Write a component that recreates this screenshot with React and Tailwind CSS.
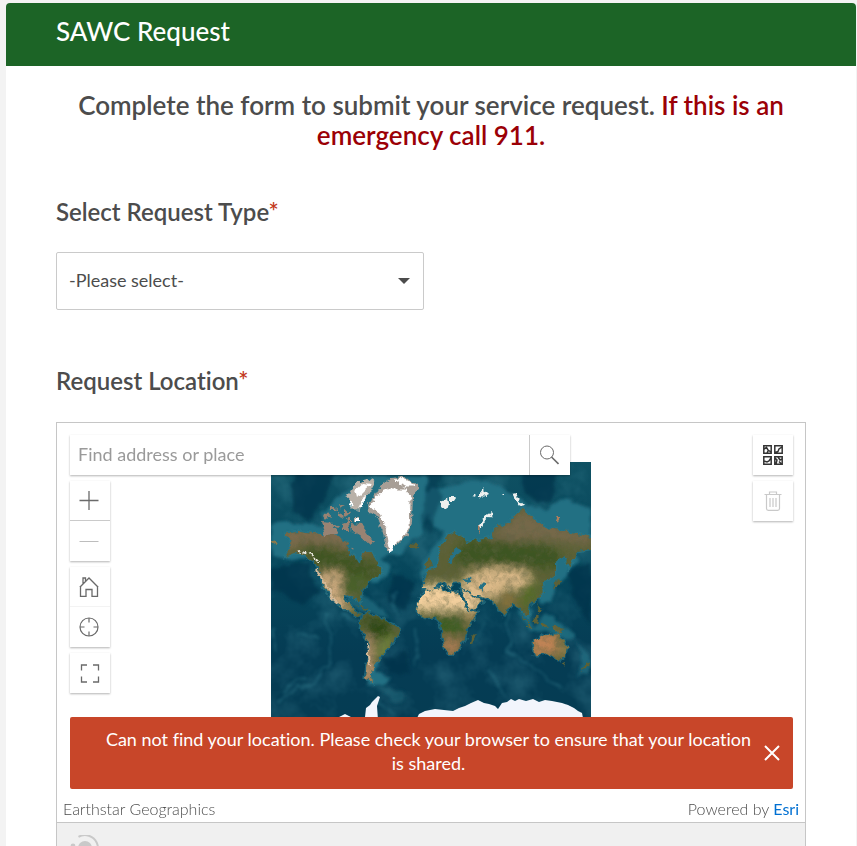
import React from "react";

const LAND = {
  northAmerica:
    "M14 71 27 69 49 72 66 73 76 80 77 90 86 98 89 103 92 90 101 90 106 100 112 110 101 116 94 125 91 130 89 141 85 135 74 133 72 140 79 140 80 144 84 150 90 153 86 154 78 149 66 141 59 133 52 124 49 110 44 100 34 93 24 91 14 95 21 83Z",
  southAmerica:
    "M91 155 97 150 109 155 117 161 129 166 124 178 117 186 109 196 102 206 99 211 101 220 94 215 97 196 98 180 89 166Z",
  africa:
    "M146 148 149 136 154 130 164 126 172 125 176 130 187 131 192 140 197 149 207 150 196 166 194 176 187 188 179 194 174 186 171 173 169 160 164 155 154 156 149 153Z",
  arabia: "M191 128 204 134 212 140 204 146 198 148Z",
  eurasia:
    "M167 90 174 76 184 70 196 80 208 78 221 75 224 65 234 63 251 48 261 55 274 65 301 71 320 75 320 88 305 90 298 106 294 94 284 99 284 113 270 121 273 130 267 136 257 146 257 155 249 146 242 141 232 153 226 143 217 136 207 133 192 127 190 120 179 121 181 127 174 121 168 120 161 127 152 128 152 119 158 109 166 104 168 98Z",
  australia:
    "M261 181 269 175 279 171 283 174 287 170 296 185 294 195 287 198 277 191 264 193Z",
};

const ISLANDS =
  "M204 171 201 183 199 182 200 175Z M249 150 257 160 262 167 258 164Z M263 157 268 153 266 163 261 160Z M271 159 276 164 271 166Z M280 163 292 167 289 171 282 167Z M290 202 294 201 292 205Z M310 208 317 199 318 203 309 210Z M284 124 288 115 290 121 283 128Z M265 142 270 149 268 151Z M139 81 146 82 146 86 140 84Z M155 102 158 95 161 105 155 107Z M84 143 98 147 95 148Z";

const ARCTIC_ISLANDS =
  "M50 61 62 62 68 72 54 73Z M52 54 58 51 61 55 54 57Z M59 44 64 44 65 48 60 48Z M67 50 75 53 72 56 67 54Z M71 62 77 60 78 68 72 68Z M80 61 90 62 103 80 99 83 88 73 81 69Z M68 42 74 45 70 48Z M81 84 84 86 80 88Z M62 64 66 62 67 66Z M75 57 79 56 79 60 76 60Z M74 48 79 50 77 53 74 52Z";

const ELLESMERE =
  "M76 34 86 20 96 17 105 20 99 31 91 42 87 50 81 44Z M82 55 89 55 88 59 82 59Z";

const GREENLAND =
  "M97 43 104 33 109 25 121 16 134 15 149 26 142 34 141 60 136 75 122 85 119 92 115 86 112 70 107 56 98 51Z";

function WorldMap() {
  return (
    <svg viewBox="0 0 320 320" className="absolute top-[39px] left-1/2 h-80 w-80 -translate-x-1/2" role="img" aria-label="World imagery">
      <defs>
        <filter id="coast" x="-5%" y="-5%" width="110%" height="110%">
          <feTurbulence type="fractalNoise" baseFrequency="0.16" numOctaves="3" seed="7" result="n" />
          <feDisplacementMap in="SourceGraphic" in2="n" scale="7" xChannelSelector="R" yChannelSelector="G" />
          <feGaussianBlur stdDeviation="0.4" />
        </filter>
        <filter id="soft6" x="-30%" y="-30%" width="160%" height="160%">
          <feGaussianBlur stdDeviation="4" />
        </filter>
        <filter id="soft2" x="-30%" y="-30%" width="160%" height="160%">
          <feTurbulence type="fractalNoise" baseFrequency="0.06" numOctaves="3" seed="3" result="n" />
          <feDisplacementMap in="SourceGraphic" in2="n" scale="12" xChannelSelector="R" yChannelSelector="G" />
          <feGaussianBlur stdDeviation="1.6" />
        </filter>
        <filter id="seaNoise" x="0" y="0" width="100%" height="100%">
          <feTurbulence type="fractalNoise" baseFrequency="0.03" numOctaves="4" seed="12" />
          <feColorMatrix values="0 0 0 0 0.14  0 0 0 0 0.46  0 0 0 0 0.55  2.4 0 0 0 -1.05" />
        </filter>
        <filter id="landNoise" x="0" y="0" width="100%" height="100%">
          <feTurbulence type="fractalNoise" baseFrequency="0.14" numOctaves="4" seed="5" />
          <feColorMatrix values="0 0 0 0 0.12  0 0 0 0 0.13  0 0 0 0 0.06  2.6 0 0 0 -1.1" />
        </filter>
        <linearGradient id="sea" x1="0" y1="0" x2="0" y2="1">
          <stop offset="0" stopColor="#0f5163" />
          <stop offset="0.35" stopColor="#06465b" />
          <stop offset="0.6" stopColor="#053c54" />
          <stop offset="1" stopColor="#053c52" />
        </linearGradient>
        <clipPath id="landClip">
          {Object.values(LAND).map((d) => (
            <path key={d} d={d} />
          ))}
          <path d={ISLANDS} />
        </clipPath>
        <clipPath id="mapClip">
          <rect width="320" height="320" />
        </clipPath>
      </defs>
      <g clipPath="url(#mapClip)">
        <rect width="320" height="320" fill="url(#sea)" />
        <rect width="320" height="320" filter="url(#seaNoise)" opacity="0.2" />
        <g filter="url(#soft2)" fill="#237083">
          <path d="M0 66 18 58 52 65 50 50 75 28 105 12 155 14 160 45 148 75 128 92 112 94 120 112 104 122 88 108 70 88 20 98 0 95Z" />
          <path d="M155 40 162 28 200 18 235 25 258 45 275 47 297 36 320 50 320 80 160 112 150 118 152 100 172 72 162 62Z" />
          <path d="M281 96 298 92 308 96 300 110 290 118 284 132 268 142 268 120Z" />
          <path d="M246 148 262 150 262 166 276 150 294 164 304 172 300 178 260 170Z" opacity="0.8" />
          <path d="M113 188 105 210 120 218 112 222 94 220 100 200Z" />
          <path d="M74 132 92 132 108 146 122 158 104 152 80 146Z" opacity="0.7" />
          <path d="M92 220 130 228 136 234 128 240 115 232Z" opacity="0.4" />
          <path d="M303 180 318 196 318 212 306 216 312 202Z" opacity="0.7" />
        </g>
        <g filter="url(#soft2)" fill="#03334a" opacity="0.7">
          <path d="M22 10 65 8 60 30 38 60 22 45Z" />
          <path d="M250 12 285 10 282 40 268 44 255 32Z" />
          <path d="M155 8 172 10 168 34 160 70 150 60 155 35Z" opacity="0.6" />
          <path d="M0 105 38 102 50 130 30 140 0 130Z" />
          <path d="M124 112 145 120 135 150 115 140Z" />
          <path d="M298 112 320 100 320 160 302 140Z" />
          <path d="M112 196 135 190 140 212 118 212Z" />
        </g>
        <g filter="url(#soft2)" fill="none" stroke="#3c8b9b" strokeWidth="2" opacity="0.34">
          <path d="M56 150 60 205 42 220 5 238" />
          <path d="M145 165 146 205M127 128 118 142 128 152" />
          <path d="M213 160 205 180M238 150V190L290 225M215 205 235 235" />
          <path d="M3 165V190M25 172 45 177M72 152 88 160" />
          <path d="M12 230 35 215M105 240 125 250" />
        </g>
        <g filter="url(#coast)">
          <g fill="none" stroke="#2b7788" strokeWidth="3" opacity="0.65">
            {Object.values(LAND).map((d) => (
              <path key={d} d={d} />
            ))}
          </g>
          <g clipPath="url(#landClip)">
            <rect width="320" height="320" fill="#5b6135" />
            <g filter="url(#soft6)">
              <path d="M10 65H78L100 92 80 88 52 82 10 88Z" fill="#7b6b4e" />
              <path d="M28 80 75 90 110 105 108 118 50 108Z" fill="#3f5524" />
              <path d="M45 113 70 108 70 128 80 150 65 150Z" fill="#d0ac80" />
              <path d="M73 114 96 112 93 134 74 133Z" fill="#49612c" />
              <path d="M90 152 118 160 125 172 112 184 100 174Z" fill="#2d4a15" />
              <path d="M90 175H101L104 222H90Z" fill="#b89370" />
              <path d="M108 178 125 170 116 195 104 196Z" fill="#70813c" />
              <path d="M140 122H193L212 136 207 150 198 149 140 149Z" fill="#f2cf9d" />
              <path d="M145 154H190L194 172 174 173Z" fill="#3c5d20" />
              <path d="M170 175 194 177 184 195 172 193Z" fill="#a57a53" />
              <path d="M196 152 206 150 197 166Z" fill="#c29b6b" />
              <path d="M224 68 251 48 320 72V84L270 78 215 82Z" fill="#75674a" />
              <path d="M190 80 225 78 280 84 292 97 284 106 245 104 185 103Z" fill="#3c5420" />
              <path d="M192 113 220 105 254 108 262 118 258 127 230 128 226 138 200 134Z" fill="#dbb988" />
              <path d="M253 120 270 119 267 138 255 148 246 138Z" fill="#566b2c" />
              <path d="M228 132 248 135 245 143 233 152Z" fill="#88723e" />
              <path d="M256 170H286L286 192 262 195Z" fill="#bf8355" />
              <path d="M287 178H299V196L288 198Z" fill="#8d7b4a" />
            </g>
            <rect width="320" height="320" filter="url(#landNoise)" opacity="0.4" />
          </g>
          <path d="M176 99 186 86 192 89 184 93 181 102Z M210 119 214 123 212 131 208 124Z M190 116 202 117 196 121Z" fill="#257286" />
          <path d="M46 108 54 122 65 142M96 180 98 204" fill="none" stroke="#d5b997" strokeWidth="2" />
          <path d="M27 88 31 90 40 92 48 101" fill="none" stroke="#e9e6dd" strokeWidth="2" strokeDasharray="4 2" />
          <path d={ARCTIC_ISLANDS} fill="#988373" />
          <path d={ELLESMERE} fill="#b9b1a8" />
          <path d="M84 28 92 21 101 22 93 29 86 36Z M91 35 96 33 92 43 87 47Z M84 56H89V59H84Z M79 38 82 42 80 44Z" fill="#fff" />
          <path d={GREENLAND} fill="#a79e96" />
          <path d="M99 44 108 31 120 27 135 27 139 38 138 65 130 77 123 83 120 92 117 80 115 65 108 50Z M124 18 134 17 143 24 132 24Z" fill="#fff" stroke="#fff" />
          <path d="M170 39 176 37 177 42 175 48 171 45Z M178 36 184 36 182 39 178 39Z M200 34 205 32 204 35Z M209 31 213 26 214 32 217 31 215 35 209 34Z M242 32 246 31 248 37 253 43 249 44 245 38Z M208 65 211 57 220 51 221 53 213 60 210 67Z M230 32 232 32 232 34Z" fill="#edf0ee" />
          <path d="M208 64 211 67 208 70Z M284 55 290 55 287 60Z" fill="#ad7e5d" />
          <path d="M0 76 8 82 6 84 0 80Z" fill="#8b7a4d" />
        </g>
        <path
          d="M0 257 30 256 68 255 74 252 80 255 94 255 95 246 99 243 101 240 107 234 109 235 106 244 107 258 145 258 148 252 154 249 164 247 173 248 182 249 188 246 194 244 200 241 207 238 213 241 218 242 224 244 227 247 231 241 236 240 240 237 244 239 248 237 255 239 262 237 268 240 274 238 281 239 291 241 297 243 303 246 307 249 311 251 312 256 320 265V320H0Z"
          fill="#f2f5fc"
        />
      </g>
    </svg>
  );
}

const STROKE = { fill: "none", stroke: "#6a6a6a", strokeWidth: 1 };

function Icon({ children, className = "" }) {
  return (
    <svg viewBox="0 0 20 20" className={`h-5 w-5 ${className}`} {...STROKE} aria-hidden="true">
      {children}
    </svg>
  );
}

function MapButton({ label, children, disabled }) {
  return (
    <button type="button" aria-label={label} disabled={disabled} className="flex h-10 w-10 items-center justify-center bg-white">
      {children}
    </button>
  );
}

const PANEL = "bg-white shadow-[0_1px_2px_rgba(0,0,0,0.3)]";

function FieldLabel({ htmlFor, children }) {
  return (
    <label htmlFor={htmlFor} className="block text-2xl leading-[30px] font-semibold">
      {children}
      <span className="text-[#c3391c]">*</span>
    </label>
  );
}

export default function App() {
  return (
    <div className="h-screen overflow-hidden bg-[#f3f3f3] pt-[3px] pr-px pl-1.5 font-[Lato,'Open_Sans',sans-serif] text-[#4c4c4c] [font-variant-ligatures:none]">
      <main className="min-h-screen rounded-t-sm bg-white">
        <header className="rounded-t-sm bg-[#1c6426] px-[50px] pt-3 pb-[19px]">
          <h1 className="text-[26px] leading-8 font-medium text-white">SAWC Request</h1>
        </header>

        <form className="px-[50px] pt-6" onSubmit={(e) => e.preventDefault()}>
          <p className="text-center text-[26px] leading-[30px] font-semibold">
            Complete the form to submit your service request.{" "}
            <span className="text-[#9b0006]">If this is an emergency call 911.</span>
          </p>

          <div className="mt-[47px]">
            <FieldLabel htmlFor="type">Select Request Type</FieldLabel>
            <div className="relative mt-[25px] max-w-[368px]">
              <select id="type" className="block h-[58px] w-full appearance-none rounded-xs border border-[#cacaca] bg-white px-3 pb-0.5 text-lg">
                <option>-Please select-</option>
              </select>
              <svg viewBox="0 0 12 6" className="pointer-events-none absolute top-[26px] right-[14px] h-1.5 w-3" aria-hidden="true">
                <path d="M0 0H12L6 6Z" fill="#4c4c4c" />
              </svg>
            </div>
          </div>

          <div className="mt-14">
            <FieldLabel htmlFor="place">Request Location</FieldLabel>
            <div className="mt-[26px] border border-[#c6c6c6]">
              <div className="relative overflow-hidden bg-white">
                <WorldMap />
                <div className="relative flex h-[294px] justify-between pt-3 pr-3 pl-[13px]">
                  <div className="flex flex-col items-start gap-1.5">
                    <div className={`flex h-10 w-[500px] ${PANEL}`}>
                      <input
                        id="place"
                        type="text"
                        placeholder="Find address or place"
                        className="min-w-0 flex-1 px-2 pb-0.5 text-lg placeholder:text-[#9a9a9a]"
                      />
                      <div className="border-l border-[#cacaca]">
                        <MapButton label="Search">
                          <Icon className="-ml-0.5">
                            <circle cx="8" cy="7.5" r="6.5" />
                            <path d="M12.5 12 19.5 19" strokeWidth="1.6" />
                          </Icon>
                        </MapButton>
                      </div>
                    </div>
                    <div className={`divide-y divide-[#cacaca] ${PANEL}`}>
                      <MapButton label="Zoom in">
                        <Icon className="-ml-0.5">
                          <path d="M.5 9.5H19.5M10 0V19" strokeWidth="1.3" />
                        </Icon>
                      </MapButton>
                      <MapButton label="Zoom out" disabled>
                        <Icon className="-ml-0.5">
                          <path d="M.5 10.5H19.5" stroke="#bdbdbd" />
                        </Icon>
                      </MapButton>
                    </div>
                    <div className={`divide-y divide-[#f3f3f3] ${PANEL}`}>
                      <MapButton label="Default map view">
                        <Icon className="-ml-0.5">
                          <path d="M1.5 10V19.5H7V12.5H13V19.5H18.5V10M.8 10.3 10 1 19.2 10.3M4 7V1H6.5V4.5" strokeWidth="1.3" />
                        </Icon>
                      </MapButton>
                      <MapButton label="Find my location">
                        <Icon className="-ml-0.5">
                          <circle cx="10" cy="10" r="9" strokeWidth="1.2" />
                          <path d="M10 1V5.5M10 14.5V19M1 10H5.5M14.5 10H19" strokeWidth="1.2" />
                        </Icon>
                      </MapButton>
                    </div>
                    <div className={PANEL}>
                      <MapButton label="Enter fullscreen">
                        <Icon>
                          <path d="M1.5 7.5V2H7M13 2H18.5V7.5M18.5 13.5V19H13M7 19H1.5V13.5" strokeWidth="1.3" />
                        </Icon>
                      </MapButton>
                    </div>
                  </div>
                  <div className="flex flex-col gap-1.5">
                    <div className={PANEL}>
                      <MapButton label="Basemap gallery">
                        <Icon>
                          <path
                            d="M.8.8H8.2V8.2H.8ZM11.8.8H19.2V8.2H11.8ZM.8 11.8H8.2V19.2H.8ZM11.8 11.8H19.2V19.2H11.8ZM1 4 3.5 2.5 5 5 8 7M5.5 5 4 8M12 7.5 15 6.5 16 4 19 2M1 16 4 17 6 16 8 13M12 13 14 15 13 19M15 12 17 15 19 14M16 16.5 18.5 19"
                            stroke="#333"
                            strokeWidth="1.5"
                          />
                        </Icon>
                      </MapButton>
                    </div>
                    <div className={PANEL}>
                      <MapButton label="Delete location" disabled>
                        <Icon>
                          <path d="M1.5 3.5H18.5M6.5 3.5V1H13.5V3.5M3.5 4V17.5Q3.5 19.3 5.3 19.3H14.7Q16.5 19.3 16.5 17.5V4M7 7V16M10 7V16M13 7V16" stroke="#c9c9c9" strokeWidth="1.2" />
                        </Icon>
                      </MapButton>
                    </div>
                  </div>
                </div>
                <div role="alert" className="relative mr-3 ml-[13px] flex h-[72px] items-center rounded-xs bg-[#c84629] pr-3 pl-6 text-white">
                  <p className="flex-1 px-1.5 pb-1 text-center text-lg leading-6">
                    Can not find your location. Please check your browser to ensure that your location is shared.
                  </p>
                  <button type="button" aria-label="Close" className="flex h-8 w-[18px] items-center justify-center">
                    <svg viewBox="0 0 16 16" className="h-4 w-4" aria-hidden="true">
                      <path d="M1 1 15 15M15 1 1 15" stroke="#fff" strokeWidth="2" />
                    </svg>
                  </button>
                </div>
                <div className="relative flex justify-between px-1.5 pt-2.5 pb-[3px] text-base leading-5 font-light">
                  <span>Earthstar Geographics</span>
                  <span>
                    Powered by{" "}
                    <a href="#esri" className="font-normal text-[#0070d2]">
                      Esri
                    </a>
                  </span>
                </div>
              </div>
              <div className="h-[50px] border-t border-[#c6c6c6] bg-[#f0f0f0] px-3 pt-3">
                <svg viewBox="0 0 30 30" className="h-[30px] w-[30px]" aria-hidden="true">
                  <circle cx="16" cy="13" r="7" fill="#c9c9c9" />
                  <path d="M9.5 1.8A13 13 0 1 1 3.5 17" fill="none" stroke="#c9c9c9" strokeWidth="2" />
                  <circle cx="4" cy="11" r="2.4" fill="#c9c9c9" />
                </svg>
              </div>
            </div>
          </div>
        </form>
      </main>
    </div>
  );
}
